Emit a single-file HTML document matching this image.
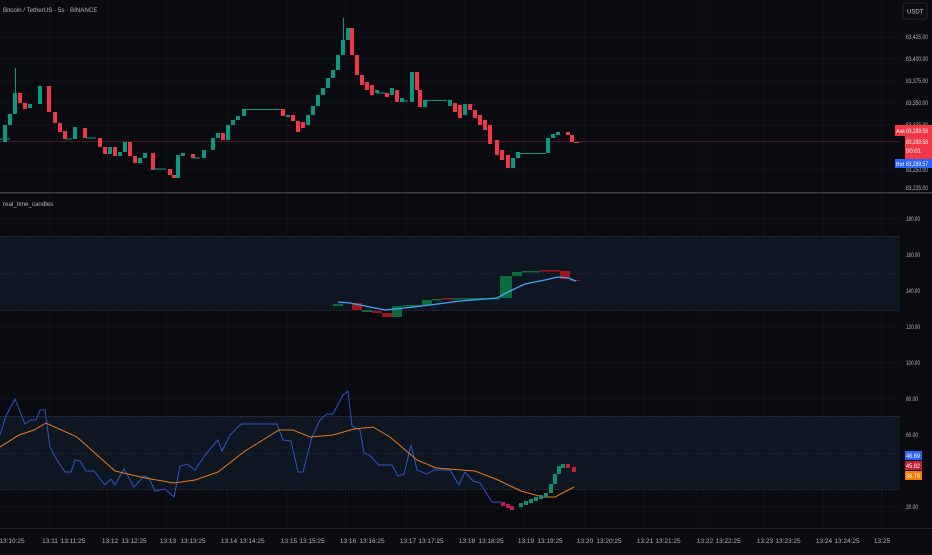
<!DOCTYPE html>
<html><head><meta charset="utf-8"><style>
html,body{margin:0;padding:0;background:#0b0c11;}
body{width:932px;height:550px;overflow:hidden;font-family:"Liberation Sans",sans-serif;}
svg text{font-family:"Liberation Sans",sans-serif;fill:#b2b5be;font-size:6.5px}
</style></head><body>
<svg width="932" height="550" viewBox="0 0 932 550" xmlns="http://www.w3.org/2000/svg">
<rect width="932" height="550" fill="#0a0b10"/>
<g stroke="#111319" stroke-width="1">
<path d="M0 37H900M0 59H900M0 81H900M0 103H900M0 125H900M0 170H900M0 219H900M0 255H900M0 291H900M0 327H900M0 363H900M0 399H900M0 435H900M0 507H900"/>
<path d="M50 0V528M107 0V528M166 0V528M227 0V528M287 0V528M346 0V528M406 0V528M465 0V528M525 0V528M585 0V528M643 0V528M704 0V528M763 0V528M823 0V528M882 0V528"/>
</g>
<text x="3" y="12" style="font-size:6.2px">Bitcoin / TetherUS · 5s · BINANCE</text>
<text x="3" y="206" style="font-size:6.2px">real_time_candles</text>
<path d="M0 141.5H900" stroke="#4a1a20" stroke-width="1"/>
<g fill="#089981">
<rect x="3" y="125" width="4" height="17"/><rect x="8" y="114" width="4" height="11"/><rect x="13" y="93" width="4" height="21"/><rect x="15" y="68" width="1" height="25"/>
<rect x="28" y="104" width="4" height="4"/><rect x="38" y="86" width="4" height="18"/><rect x="73" y="127" width="4" height="12"/>
<rect x="108" y="147" width="4" height="7"/><rect x="118" y="152" width="4" height="4"/><rect x="123" y="142" width="4" height="10"/>
<rect x="138" y="158" width="4" height="5"/><rect x="143" y="153" width="4" height="5"/><rect x="176" y="155" width="4" height="23"/><rect x="181" y="153" width="4" height="3"/>
<rect x="202" y="150" width="4" height="8"/><rect x="211" y="138" width="4" height="12"/><rect x="216" y="133" width="4" height="5"/><rect x="226" y="125" width="4" height="15"/>
<rect x="231" y="120" width="4" height="5"/><rect x="236" y="116" width="4" height="4"/><rect x="242" y="109" width="4" height="7"/><rect x="246" y="109" width="36" height="1"/>
<rect x="286" y="115" width="4" height="2"/><rect x="306" y="115" width="4" height="10"/><rect x="311" y="106" width="4" height="9"/><rect x="316" y="95" width="4" height="11"/>
<rect x="321" y="88" width="4" height="7"/><rect x="326" y="78" width="4" height="10"/><rect x="331" y="70" width="4" height="8"/><rect x="336" y="55" width="4" height="15"/>
<rect x="341" y="40" width="4" height="15"/><rect x="343" y="18" width="1" height="22"/><rect x="346" y="28" width="4" height="12"/>
<rect x="375" y="90" width="4" height="3"/><rect x="390" y="88" width="4" height="7"/><rect x="400" y="98" width="4" height="4"/><rect x="410" y="72" width="4" height="30"/>
<rect x="423" y="100" width="4" height="7"/><rect x="427" y="100" width="20" height="1"/><rect x="448" y="100" width="4" height="6"/><rect x="463" y="104" width="4" height="11"/>
<rect x="511" y="158" width="4" height="10"/><rect x="516" y="152" width="4" height="6"/><rect x="520" y="153" width="26" height="1"/><rect x="546" y="138" width="4" height="15"/>
<rect x="551" y="134" width="4" height="4"/><rect x="556" y="132" width="4" height="3"/>
</g>
<g fill="#f23645">
<rect x="18" y="93" width="4" height="10"/><rect x="23" y="103" width="4" height="6"/><rect x="47" y="86" width="4" height="26"/><rect x="53" y="112" width="4" height="11"/>
<rect x="58" y="123" width="4" height="9"/><rect x="63" y="131" width="4" height="8"/><rect x="83" y="128" width="4" height="10"/><rect x="98" y="138" width="4" height="9"/>
<rect x="103" y="147" width="4" height="7"/><rect x="113" y="147" width="4" height="9"/><rect x="128" y="142" width="4" height="14"/><rect x="133" y="156" width="4" height="7"/>
<rect x="151" y="153" width="4" height="17"/><rect x="168" y="169" width="4" height="6"/><rect x="172" y="175" width="4" height="3"/><rect x="191" y="154" width="4" height="4"/>
<rect x="221" y="133" width="4" height="7"/><rect x="281" y="109" width="4" height="7"/><rect x="291" y="115" width="4" height="6"/><rect x="296" y="121" width="4" height="11"/>
<rect x="301" y="122" width="4" height="6"/><rect x="350" y="28" width="4" height="27"/><rect x="355" y="55" width="4" height="20"/><rect x="360" y="75" width="4" height="10"/>
<rect x="365" y="82" width="4" height="8"/><rect x="370" y="85" width="4" height="10"/><rect x="385" y="93" width="4" height="4"/><rect x="395" y="90" width="4" height="12"/>
<rect x="415" y="72" width="4" height="18"/><rect x="418" y="90" width="4" height="17"/><rect x="453" y="103" width="4" height="9"/><rect x="458" y="105" width="4" height="13"/>
<rect x="468" y="104" width="4" height="6"/><rect x="473" y="110" width="4" height="8"/><rect x="478" y="115" width="4" height="10"/><rect x="483" y="120" width="4" height="10"/>
<rect x="488" y="125" width="4" height="19"/><rect x="495" y="140" width="4" height="15"/><rect x="500" y="150" width="4" height="10"/><rect x="506" y="155" width="4" height="13"/>
<rect x="566" y="132" width="4" height="3"/><rect x="570" y="135" width="4" height="7"/><rect x="574" y="142" width="5" height="1"/>
</g>
<path d="M0 139H10M66 139H72M86 138H96M153 169H166M193 158H200M377 93H385M403 101H408" stroke="#089981" stroke-width="1"/>
<rect x="0" y="192" width="932" height="1.5" fill="#3a3d47"/>
<rect x="0" y="528" width="932" height="1" fill="#22252e"/>
<rect x="0" y="236" width="900" height="74" fill="#0e1621"/>
<rect x="0" y="416" width="900" height="73" fill="#0e1621"/>
<g stroke="#3d4452" stroke-width="0.8" stroke-dasharray="1.5,1.5">
<path d="M0 236.5H900M0 310.5H900M0 416.5H900M0 489.5H900"/></g>
<g stroke="#262c38" stroke-width="0.8" stroke-dasharray="1.5,1.5"><path d="M0 273.5H900M0 453.5H900"/></g>
<g fill="#0b6b3c">
<rect x="333" y="304" width="10" height="2"/><rect x="362" y="310" width="10" height="2"/><rect x="392" y="306" width="10" height="11"/>
<rect x="402" y="305" width="20" height="1.5"/><rect x="422" y="300" width="10" height="5"/><rect x="432" y="299" width="10" height="1.5"/>
<rect x="452" y="298" width="48" height="1.5"/><rect x="500" y="276" width="12" height="22"/><rect x="512" y="272" width="10" height="4"/><rect x="522" y="271" width="18" height="1.5"/>
</g>
<g fill="#a3151c">
<rect x="352" y="303" width="10" height="7"/><rect x="372" y="311" width="10" height="2"/><rect x="382" y="313" width="10" height="4"/><rect x="442" y="298" width="10" height="1.5"/>
<rect x="540" y="270" width="20" height="1.5"/><rect x="560" y="271" width="10" height="8"/><rect x="570" y="280" width="10" height="1"/>
</g>
<path d="M338 302 L350 303 L365 306 L385 310 L405 308 L430 305 L460 301 L497 298 L510 291 L525 284 L545 280 L558 277 L568 278 L576 281" fill="none" stroke="#42a5f5" stroke-width="1.3"/>
<path d="M0 435 L6 416 L15 399 L25 424 L31 420 L36 420 L40 410 L45 410 L50 447 L57 460 L65 472 L71 472 L75 460 L80 461 L86 471 L94 471 L105 485 L111 479 L115 485 L124 469 L134 487 L144 476 L149 478 L155 491 L165 489 L174 497 L180 466 L187 464 L195 470 L203 458 L210 449 L218 440 L222 451 L230 435 L241 424 L277 424 L283 440 L291 441 L298 472 L303 472 L312 437 L320 420 L327 414 L333 414 L343 395 L348 391 L352 426 L360 430 L364 453 L369 455 L379 465 L392 465 L398 476 L404 474 L411 445 L417 470 L427 474 L434 470 L450 470 L459 485 L465 472 L473 481 L480 483 L492 502 L501 502" fill="none" stroke="#2c56c9" stroke-width="1"/>
<path d="M0 447 L19 435 L34 430 L46 423 L77 437 L115 471 L145 478 L174 483 L195 480 L218 472 L245 451 L279 430 L293 430 L310 437 L333 435 L354 429 L373 427 L390 437 L417 460 L436 468 L475 471 L498 480 L521 491 L543 497 L555 497 L574 487" fill="none" stroke="#e8781e" stroke-width="1"/>
<g fill="#c2185b"><rect x="501" y="502" width="4" height="4"/><rect x="506" y="504" width="4" height="4"/><rect x="510" y="506" width="4" height="4"/></g>
<g fill="#0f8f6e">
<rect x="519" y="503" width="4" height="4"/><rect x="524" y="501" width="4" height="4"/><rect x="529" y="499" width="4" height="4"/><rect x="534" y="497" width="4" height="4"/>
<rect x="539" y="495" width="4" height="4"/><rect x="544" y="493" width="4" height="4"/><rect x="549" y="484" width="4" height="9"/><rect x="553" y="474" width="4" height="10"/>
<rect x="557" y="466" width="4" height="8"/><rect x="561" y="464" width="4" height="4"/>
</g>
<g fill="#c21f33"><rect x="566" y="464" width="4" height="4"/><rect x="572" y="467" width="4" height="5"/></g>
<rect x="903" y="3" width="24" height="16" rx="2" fill="#0b0c11" stroke="#2a2e39" stroke-width="0.8"/>
<text x="907" y="13.5" style="font-size:6px;fill:#d1d4dc">USDT</text>
<g style="font-size:6px">
<text x="906" y="39" textLength="22" lengthAdjust="spacingAndGlyphs">83,425.00</text><text x="906" y="61" textLength="22" lengthAdjust="spacingAndGlyphs">83,400.00</text><text x="906" y="83" textLength="22" lengthAdjust="spacingAndGlyphs">83,375.00</text>
<text x="906" y="105" textLength="22" lengthAdjust="spacingAndGlyphs">83,350.00</text><text x="906" y="127" textLength="22" lengthAdjust="spacingAndGlyphs">83,325.00</text><text x="906" y="172" textLength="22" lengthAdjust="spacingAndGlyphs">83,250.00</text><text x="906" y="190" textLength="22" lengthAdjust="spacingAndGlyphs">83,225.00</text>
<text x="906" y="221" textLength="14" lengthAdjust="spacingAndGlyphs">180.00</text><text x="906" y="257" textLength="14" lengthAdjust="spacingAndGlyphs">160.00</text><text x="906" y="293" textLength="14" lengthAdjust="spacingAndGlyphs">140.00</text><text x="906" y="329" textLength="14" lengthAdjust="spacingAndGlyphs">120.00</text>
<text x="906" y="365" textLength="14" lengthAdjust="spacingAndGlyphs">100.00</text><text x="906" y="401" textLength="12" lengthAdjust="spacingAndGlyphs">80.00</text><text x="906" y="437" textLength="12" lengthAdjust="spacingAndGlyphs">60.00</text><text x="906" y="509" textLength="12" lengthAdjust="spacingAndGlyphs">20.00</text>
</g>
<rect x="895" y="125" width="10" height="11" fill="#f23645"/><text x="896" y="133" style="font-size:5.5px;fill:#fff">Ask</text>
<rect x="905" y="125" width="27" height="34" fill="#f23645"/>
<text x="906" y="133" style="font-size:6px;fill:#fff" textLength="22" lengthAdjust="spacingAndGlyphs">83,289.58</text>
<text x="906" y="144" style="font-size:6px;fill:#fff" textLength="22" lengthAdjust="spacingAndGlyphs">83,289.58</text>
<text x="906" y="153" style="font-size:6px;fill:#fff">00:01</text>
<rect x="895" y="159" width="10" height="9" fill="#2962ff"/><text x="896" y="166" style="font-size:5.5px;fill:#fff">Bid</text>
<rect x="905" y="159" width="27" height="9" fill="#2962ff"/><text x="906" y="166" style="font-size:6px;fill:#fff" textLength="22" lengthAdjust="spacingAndGlyphs">83,289.57</text>
<rect x="905" y="451" width="17" height="9" fill="#2962ff"/><text x="906" y="458" style="font-size:6px;fill:#fff" textLength="14" lengthAdjust="spacingAndGlyphs">46.69</text>
<rect x="905" y="461" width="17" height="9" fill="#c21f33"/><text x="906" y="468" style="font-size:6px;fill:#fff" textLength="14" lengthAdjust="spacingAndGlyphs">45.82</text>
<rect x="905" y="471" width="17" height="9" fill="#f57c00"/><text x="906" y="478" style="font-size:6px;fill:#fff" textLength="14" lengthAdjust="spacingAndGlyphs">38.79</text>
<g style="font-size:6px" text-anchor="middle">
<text x="12" y="543">13:10:25</text><text x="50" y="543">13:11</text><text x="73" y="543">13:11:25</text><text x="110" y="543">13:12</text>
<text x="134" y="543">13:12:25</text><text x="168" y="543">13:13</text><text x="193" y="543">13:13:25</text><text x="229" y="543">13:14</text>
<text x="252" y="543">13:14:25</text><text x="289" y="543">13:15</text><text x="312" y="543">13:15:25</text><text x="348" y="543">13:16</text>
<text x="372" y="543">13:16:25</text><text x="408" y="543">13:17</text><text x="431" y="543">13:17:25</text><text x="467" y="543">13:18</text>
<text x="491" y="543">13:18:25</text><text x="526" y="543">13:19</text><text x="550" y="543">13:19:25</text><text x="585" y="543">13:20</text>
<text x="609" y="543">13:20:25</text><text x="645" y="543">13:21</text><text x="668" y="543">13:21:25</text><text x="705" y="543">13:22</text>
<text x="728" y="543">13:22:25</text><text x="765" y="543">13:23</text><text x="788" y="543">13:23:25</text><text x="824" y="543">13:24</text>
<text x="847" y="543">13:24:25</text><text x="882" y="543">13:25</text>
</g>
</svg>
</body></html>
